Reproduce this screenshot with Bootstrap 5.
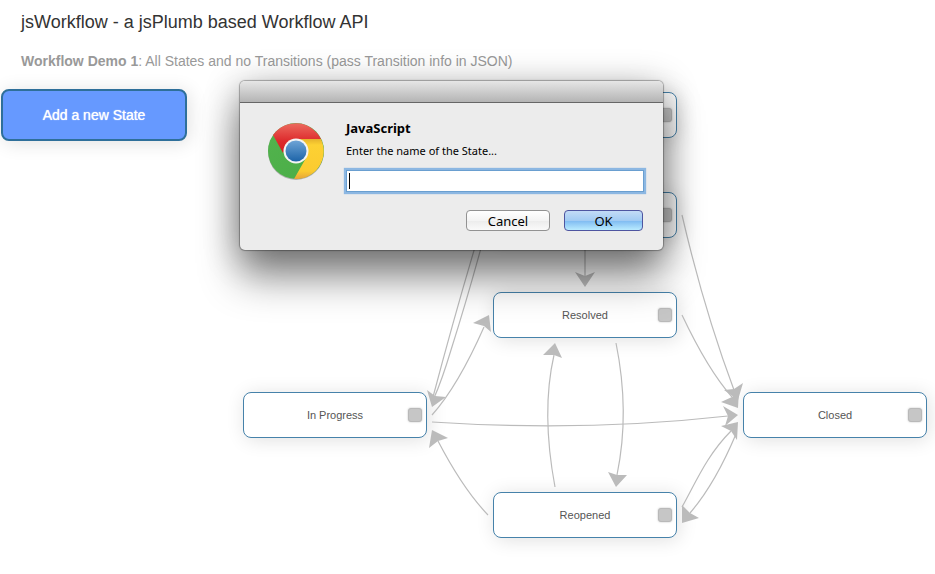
<!DOCTYPE html>
<html lang="en">
<head>
<meta charset="utf-8">
<meta name="viewport" content="width=device-width, initial-scale=1">
<title>jsWorkflow</title>
<link href="https://cdn.jsdelivr.net/npm/bootstrap@5.3.0/dist/css/bootstrap.min.css" rel="stylesheet">
<style>
body { font-family: "Liberation Sans", Arial, sans-serif; background: #fff; }
.page-title { font-size: 18px; line-height: 24px; color: #333; padding-top: 10px; padding-left: 21px; margin-bottom: 17px; }
.page-sub { font-size: 14px; line-height: 20px; color: #999; padding-left: 21px; margin-bottom: 18px; }
.add-state { width: 186px; height: 52px; margin-left: 1px; font-size: 14px; color: #fff; text-shadow: 0 0 1px #fff; background: #69f; border: 2px solid #2e6f9a; border-radius: 8px; box-shadow: 2px 2px 19px #e0e0e0; }
.add-state:hover { color: #fff; background: #5c8df5; border-color: #2e6f9a; }
.flow-lines { left: 0; top: 0; width: 935px; height: 574px; pointer-events: none; }
.state { position: absolute; width: 184px; height: 46px; font-size: 11px; color: #555; background: #fff; border: 1px solid #4682aa; border-radius: 8px; box-shadow: 2px 2px 19px #e0e0e0; }
.state-handle { position: absolute; right: 4px; top: 15px; width: 14px; height: 14px; background: #c6c6c6; border: 1px solid #b9b9b9; border-radius: 3px; box-shadow: 0 0 2px #bbb; }
.s-first { left: 493px; top: 92px; }
.s-second { left: 493px; top: 192px; }
.s-resolved { left: 493px; top: 292px; }
.s-progress { left: 243px; top: 392px; }
.s-closed { left: 743px; top: 392px; }
.s-reopened { left: 493px; top: 492px; }
.prompt-box { position: absolute; left: 240px; top: 81px; width: 423px; background: #ececec; border-radius: 5px; box-shadow: 0 0 1px 1px rgba(0,0,0,.3), 0 28px 40px rgba(0,0,0,.42), 0 6px 36px rgba(0,0,0,.32); font-family: "Noto Sans", "Open Sans", sans-serif; color: #000; }
.prompt-bar { height: 22px; background: linear-gradient(#e6e6e6, #b4b4b4); border-bottom: 1px solid #666; border-radius: 5px 5px 0 0; }
.prompt-body { padding: 16px 19px 19px 26px; gap: 18px; }
.prompt-icon { margin-top: 2px; }
.prompt-head { font-size: 13px; line-height: 18px; font-weight: bold; margin-bottom: 6px; }
.prompt-label { font-size: 11px; line-height: 16px; margin-bottom: 12px; }
.prompt-input { display: block; width: 100%; height: 20px; padding: 0 3px; font-size: 12px; border: 0; background: #fff; outline: 0; caret-color: transparent; box-shadow: 0 0 0 1px #6a9fd0, 0 0 1px 3px #8cb7e2; }
.prompt-caret { position: absolute; left: 2px; top: 2px; width: 1px; height: 16px; background: #000; }
.prompt-field { margin: 0 1px; }
.prompt-actions { gap: 14px; margin-top: 19px; padding-right: 1px; }
.mac-btn { height: 21px; padding: 0; font-family: inherit; font-size: 13px; line-height: 18px; color: #000; border-radius: 4px; }
.mac-cancel { width: 84px; border: 1px solid #929292; background: linear-gradient(#fff, #f4f4f4 50%, #ebebeb 50%, #fafafa); }
.mac-ok { width: 79px; border: 1px solid #4e55a0; background: linear-gradient(#c3dbf6, #a2cbf3 50%, #7db9f1 50%, #b9ebff); }
</style>
<script src="https://cdn.jsdelivr.net/npm/bootstrap@5.3.0/dist/js/bootstrap.bundle.min.js" defer></script>
</head>
<body>
<main class="position-relative min-vh-100 overflow-hidden">
  <h1 class="page-title fw-normal">jsWorkflow - a jsPlumb based Workflow API</h1>
  <p class="page-sub"><strong>Workflow Demo 1</strong>: All States and no Transitions (pass Transition info in JSON)</p>
  <button type="button" class="btn add-state">Add a new State</button>

  <div class="state s-first"><span class="state-handle"></span></div>
  <div class="state s-second"><span class="state-handle"></span></div>
  <div class="state s-resolved d-flex align-items-center justify-content-center">Resolved<span class="state-handle"></span></div>
  <div class="state s-progress d-flex align-items-center justify-content-center">In Progress<span class="state-handle"></span></div>
  <div class="state s-closed d-flex align-items-center justify-content-center">Closed<span class="state-handle"></span></div>
  <div class="state s-reopened d-flex align-items-center justify-content-center">Reopened<span class="state-handle"></span></div>

  <svg class="flow-lines position-absolute" viewBox="0 0 935 574" aria-hidden="true">
    <g fill="none" stroke="#bbb" stroke-width="1.2">
      <path d="M488 204Q460 295 433 397"/>
      <path d="M488 222Q470 290 451 350Q442 380 434 398"/>
      <path d="M432 415Q458 386 484 327"/>
      <path d="M432 422Q585 432 728 416"/>
      <path d="M488 515Q463 489 438 441"/>
      <path d="M555 487Q541 412 554 355"/>
      <path d="M616 343Q630 412 617 475"/>
      <path d="M585 238V276"/>
      <path d="M682 215Q704 310 734 390"/>
      <path d="M682 315Q708 370 732 397"/>
      <path d="M682 507C696 482 707 455 731 431"/>
      <path d="M736 434Q715 484 690 513"/>
    </g>
    <g fill="#bbb">
      <path d="M432 407L427 390L435 396L446 397Z"/>
      <path d="M489 315L473 323L484 326L491 332Z"/>
      <path d="M738 415L723 406L728 416L725 426Z"/>
      <path d="M432 430L448 438L438 441L429 448Z"/>
      <path d="M555 343L543 355L554 355L562 358Z"/>
      <path d="M616 487L608 472L617 475L627 475Z"/>
      <path d="M585 287L575 272L585 276L595 272Z"/>
      <path d="M738 400L724 390L734 389L743 383Z"/>
      <path d="M738 408L721 402L732 397L739 390Z"/>
      <path d="M738 422L721 426L731 431L737 440Z"/>
      <path d="M682 523L682 505L690 513L699 518Z"/>
    </g>
  </svg>

  <form class="prompt-box" role="dialog" aria-labelledby="promptHead">
    <div class="prompt-bar"></div>
    <div class="prompt-body d-flex">
      <svg class="prompt-icon flex-shrink-0" width="62" height="62" viewBox="0 0 62 62" aria-hidden="true">
        <defs>
          <linearGradient id="red" x1="0" y1="0" x2="0" y2="1"><stop offset="0" stop-color="#ec6a5e"/><stop offset=".6" stop-color="#dd2a2c"/><stop offset="1" stop-color="#d3201f"/></linearGradient>
          <linearGradient id="yellow" x1="0" y1="0" x2="0" y2="1"><stop offset="0" stop-color="#e5b22c"/><stop offset=".15" stop-color="#fdd133"/><stop offset=".8" stop-color="#fbcb30"/><stop offset="1" stop-color="#e5a43a"/></linearGradient>
          <linearGradient id="green" x1="0" y1="0" x2="1" y2="1"><stop offset="0" stop-color="#53b34d"/><stop offset=".7" stop-color="#4caf49"/><stop offset="1" stop-color="#3b913d"/></linearGradient>
          <linearGradient id="blue" x1="0" y1="0" x2="0" y2="1"><stop offset="0" stop-color="#6ea4d6"/><stop offset="1" stop-color="#1d64a8"/></linearGradient>
        </defs>
        <circle cx="30" cy="31" r="28" fill="#000" opacity=".25"/>
        <circle cx="30" cy="30" r="28" fill="url(#green)"/>
        <path d="M7 14A28 28 0 0 1 55 18L30 18L18 30L17 32Z" fill="url(#red)"/>
        <path d="M55 18A28 28 0 0 1 28 58L40 37L30 18Z" fill="url(#yellow)"/>
        <circle cx="30" cy="30" r="12.5" fill="#f4f4f4"/>
        <circle cx="30" cy="30" r="10.5" fill="url(#blue)"/>
      </svg>
      <div class="flex-grow-1">
        <div class="prompt-head" id="promptHead">JavaScript</div>
        <label class="prompt-label d-block" for="stateName">Enter the name of the State...</label>
        <div class="prompt-field position-relative">
          <input class="prompt-input" id="stateName" type="text" autofocus>
          <span class="prompt-caret"></span>
        </div>
        <div class="prompt-actions d-flex justify-content-end">
          <button type="button" class="mac-btn mac-cancel">Cancel</button>
          <button type="button" class="mac-btn mac-ok">OK</button>
        </div>
      </div>
    </div>
  </form>
</main>
</body>
</html>
